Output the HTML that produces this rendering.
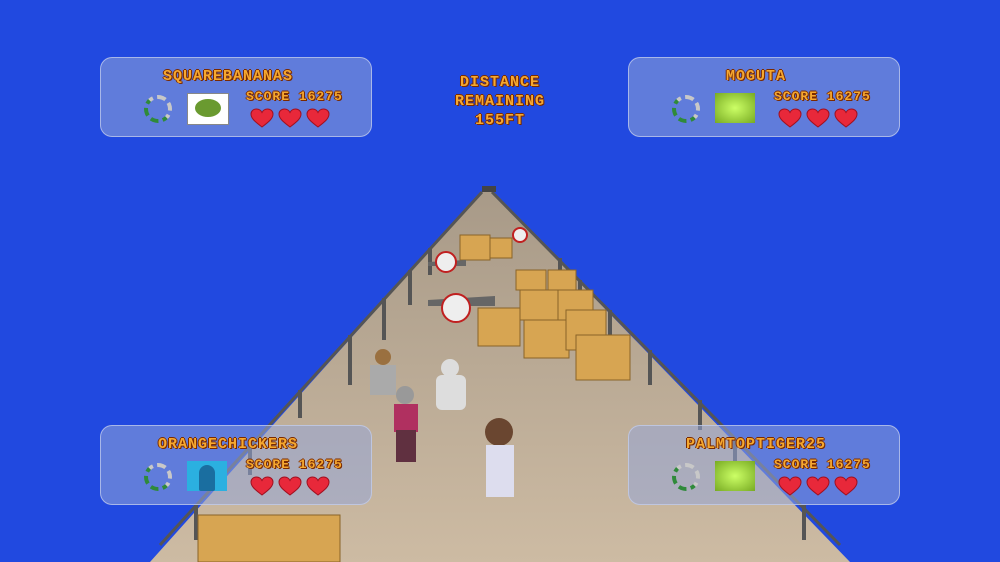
<!DOCTYPE html>
<html><head><meta charset="utf-8"><style>
body{margin:0;width:1000px;height:562px;overflow:hidden;background:#2149e0;font-family:"Liberation Mono",monospace}
svg{position:absolute;left:0;top:0}
.p{position:absolute;width:270px;height:78px;border:1.5px solid rgba(200,210,240,.7);border-radius:12px;background:rgba(150,165,215,.55)}
.t{position:absolute;color:#f5a830;font-weight:bold;text-shadow:1px 1px 0 #7a2a00,-1px 0 0 #7a2a00,0 -1px 0 #7a2a00,1px 0 0 #7a2a00;letter-spacing:1px;white-space:nowrap}
.n{font-size:15px;top:10px;width:100%;text-align:center;left:-8px}
.s{font-size:13px;top:31px;left:145px}
.h{position:absolute;top:50px;left:148px;width:82px;height:20px}
.r{position:absolute;left:43px;top:37px;width:28px;height:28px;border-radius:50%;border:4px dashed #c8c8c8;box-sizing:border-box;border-left-color:#2f8a3a;border-bottom-color:#2f8a3a}
.a{position:absolute;left:86px;top:35px;width:40px;height:30px}
</style></head><body>
<svg width="1000" height="562">
<defs><linearGradient id="rd" x1="0" y1="0" x2="0" y2="1"><stop offset="0" stop-color="#a89a88"/><stop offset="1" stop-color="#cdbba3"/></linearGradient>
<symbol id="ht" viewBox="0 0 24 20"><path d="M12 19 C4 13 1 10 1 6 C1 3 3.5 1 6.5 1 C9 1 11 2.5 12 4.5 C13 2.5 15 1 17.5 1 C20.5 1 23 3 23 6 C23 10 20 13 12 19Z" fill="#e8283a" stroke="#a01020"/></symbol></defs>
<polygon points="150,562 850,562 492,192 482,192" fill="url(#rd)"/>
<polyline points="160,545 482,192" stroke="#555" stroke-width="3" fill="none"/>
<polyline points="840,545 492,192" stroke="#555" stroke-width="3" fill="none"/>
<g stroke="#555" stroke-width="4">
<line x1="196" y1="505" x2="196" y2="540"/><line x1="250" y1="445" x2="250" y2="475"/><line x1="300" y1="390" x2="300" y2="418"/><line x1="350" y1="335" x2="350" y2="385"/><line x1="384" y1="298" x2="384" y2="340"/><line x1="410" y1="270" x2="410" y2="305"/><line x1="430" y1="248" x2="430" y2="275"/>
<line x1="804" y1="505" x2="804" y2="540"/><line x1="735" y1="437" x2="735" y2="480"/><line x1="700" y1="400" x2="700" y2="430"/><line x1="650" y1="350" x2="650" y2="385"/><line x1="610" y1="310" x2="610" y2="340"/><line x1="580" y1="280" x2="580" y2="305"/><line x1="560" y1="258" x2="560" y2="280"/>
</g>
<rect x="482" y="186" width="14" height="6" fill="#444"/>
<g fill="#d7a552" stroke="#8a6428">
<rect x="460" y="235" width="30" height="25"/><rect x="490" y="238" width="22" height="20"/>
<rect x="516" y="270" width="30" height="20"/><rect x="548" y="270" width="28" height="20"/>
<rect x="520" y="290" width="40" height="30"/><rect x="558" y="290" width="35" height="30"/>
<rect x="478" y="308" width="42" height="38"/><rect x="524" y="320" width="45" height="38"/>
<rect x="566" y="310" width="40" height="40"/><rect x="576" y="335" width="54" height="45"/>
<rect x="198" y="515" width="142" height="47"/>
</g>
<g fill="#666"><polygon points="428,300 495,296 495,306 428,306"/><polygon points="428,262 466,260 466,266 428,266"/></g>
<g fill="#eee" stroke="#c02020" stroke-width="2"><circle cx="456" cy="308" r="14"/><circle cx="446" cy="262" r="10"/><circle cx="520" cy="235" r="7"/></g>
<g fill="#ddd"><circle cx="450" cy="368" r="9"/><rect x="436" y="375" width="30" height="35" rx="6"/>
<circle cx="383" cy="357" r="8" fill="#9a7040"/><rect x="370" y="365" width="26" height="30" fill="#aaa"/>
<circle cx="405" cy="395" r="9" fill="#999"/><rect x="394" y="404" width="24" height="28" fill="#b03060"/><rect x="396" y="430" width="20" height="32" fill="#603040"/>
<circle cx="499" cy="432" r="14" fill="#6a4630"/><rect x="486" y="445" width="28" height="52" fill="#dde"/></g>
</svg>
<div class="p" style="left:100px;top:57px"><div class="t n">SQUAREBANANAS</div><div class="r"></div><div class="a" style="background:#fff;border:1px solid #888"><div style="margin:5px 7px;width:26px;height:18px;border-radius:50%;background:#6a9a30"></div></div><div class="t s">SCORE 16275</div><svg class="h" style="position:absolute;left:148px;top:50px"><use href="#ht" x="0" width="26" height="20"/><use href="#ht" x="28" width="26" height="20"/><use href="#ht" x="56" width="26" height="20"/></svg></div>
<div class="p" style="left:628px;top:57px"><div class="t n">MOGUTA</div><div class="r"></div><div class="a" style="background:radial-gradient(#cf6,#7a2)"></div><div class="t s">SCORE 16275</div><svg class="h" style="position:absolute;left:148px;top:50px"><use href="#ht" x="0" width="26" height="20"/><use href="#ht" x="28" width="26" height="20"/><use href="#ht" x="56" width="26" height="20"/></svg></div>
<div class="p" style="left:100px;top:425px"><div class="t n">ORANGECHICKERS</div><div class="r"></div><div class="a" style="background:#2bb0e0"><div style="margin:4px 12px;width:16px;height:26px;border-radius:8px 8px 2px 2px;background:#1a6ea0"></div></div><div class="t s">SCORE 16275</div><svg class="h" style="position:absolute;left:148px;top:50px"><use href="#ht" x="0" width="26" height="20"/><use href="#ht" x="28" width="26" height="20"/><use href="#ht" x="56" width="26" height="20"/></svg></div>
<div class="p" style="left:628px;top:425px"><div class="t n">PALMTOPTIGER25</div><div class="r"></div><div class="a" style="background:radial-gradient(#cf6,#7a2)"></div><div class="t s">SCORE 16275</div><svg class="h" style="position:absolute;left:148px;top:50px"><use href="#ht" x="0" width="26" height="20"/><use href="#ht" x="28" width="26" height="20"/><use href="#ht" x="56" width="26" height="20"/></svg></div>
<div class="t" style="left:440px;top:73px;width:120px;text-align:center;font-size:15px;line-height:19px">DISTANCE<br>REMAINING<br>155FT</div>
</body></html>
